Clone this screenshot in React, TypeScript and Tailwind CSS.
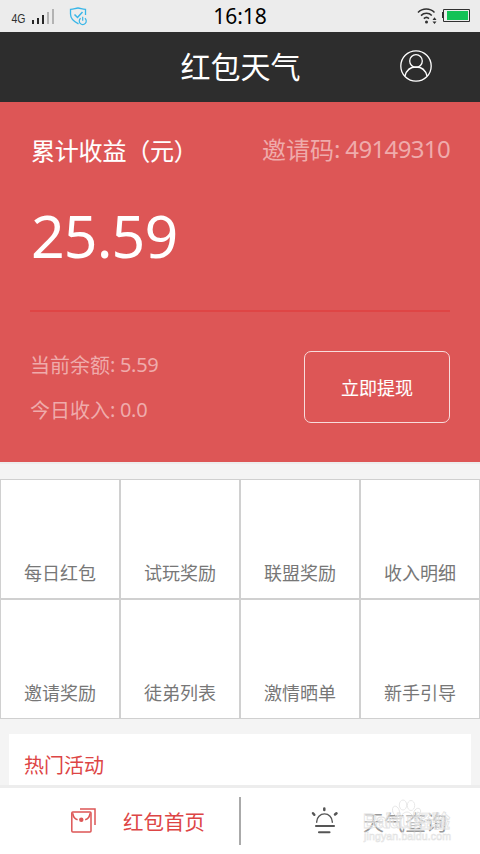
const tiles = ["每日红包", "试玩奖励", "联盟奖励", "收入明细", "邀请奖励", "徒弟列表", "激情晒单", "新手引导"];

function StatusBar() {
  return (
    <div className="relative flex h-8 shrink-0 items-center justify-center bg-[#ececec] text-black">
      <div className="absolute left-0 top-0">
        <svg width="96" height="32" viewBox="0 0 96 32" fill="none">
          <text x="11.5" y="23" fontSize="13" fill="#303030" fontFamily="Liberation Sans, sans-serif" textLength="14" lengthAdjust="spacingAndGlyphs">4G</text>
          <path d="M33 20v4M38 18v6M43 15v9" stroke="#262626" strokeWidth="2" />
          <path d="M48 12v12M53 9v15" stroke="#b3b3b3" strokeWidth="2" />
          <path d="M78.5 23.8C72.500 21 70.500 18 70.500 14V9.300C74 9.300 75.500 8 78 8s4 1.300 7.500 1.300V15" stroke="#38b6e8" strokeWidth="1.300" />
          <path d="M74.500 14.500l3 3 5-5.500" stroke="#38b6e8" strokeWidth="1.500" />
          <path d="M80.600 18.300a3.500 3.500 0 1 0 4.300 0M82.700 16.800v4" stroke="#38b6e8" strokeWidth="1.200" />
        </svg>
      </div>
      <span className="text-[21px] leading-8">16:18</span>
      <div className="absolute right-0 top-0">
        <svg width="68" height="32" viewBox="0 0 68 32" fill="none">
          <path d="M6 12.500c4.500-4.600 12-4.600 16.500 0M9 15.600c3-3 8-3 10.800 0M11.800 18.600c1.700-1.600 3.600-1.600 5.200 0" stroke="#303030" strokeWidth="1.500" />
          <circle cx="14.500" cy="22" r="1.500" fill="#303030" />
          <path d="M20.500 20l2-2.700 2 2.700zM20.500 21.500l2 2.500 2-2.500z" fill="#303030" />
          <path d="M31.500 9.500h26v12h-26z" stroke="#303030" />
          <path d="M30 12h1v6h-1z" fill="#303030" />
          <path d="M35 11h21v9H35z" fill="#12c256" />
        </svg>
      </div>
    </div>
  );
}

function Header() {
  return (
    <header className="grid h-[70px] shrink-0 grid-cols-[1fr_auto_1fr] items-center bg-[#2d2d2d] text-white">
      <span />
      <h1 className="pl-px text-[30px] leading-[70px]">红包天气</h1>
      <svg className="mr-12 -mt-0.5 justify-self-end" width="32" height="32" viewBox="0 0 32 32" fill="none" stroke="white" strokeWidth="1.300">
        <circle cx="16" cy="16" r="15.200" />
        <circle cx="16" cy="11" r="6.300" />
        <path d="M5 26C6.500 20 10.500 17 16 17s9.500 3 11 9" />
      </svg>
    </header>
  );
}

function Earnings() {
  return (
    <section className="h-[360px] shrink-0 bg-[#dd5656] px-[30px] text-white">
      <div className="flex justify-between pt-[30px] text-2xl leading-9">
        <span className="pl-px pt-px tracking-[-0.2px] [-webkit-text-stroke:0.1px_white]">累计收益（元）</span>
        <span className="text-[#efabab]">邀请码<span className="inline-block -translate-y-px tracking-[-0.65px]">: 49149310</span></span>
      </div>
      <div className="mt-[29px] h-[74px] pl-px text-[59px] leading-[74px] tracking-[-0.9px]">25.59</div>
      <div className="mt-[38px] h-0.5 bg-[#df4545]" />
      <div className="mt-[39px] flex justify-between">
        <div className="text-xl leading-[30px] text-[#efabab]">
          <p>当前余额<span className="inline-block -translate-y-px tracking-[-0.3px]">: 5.59</span></p>
          <p className="mt-[15px]">今日收入<span className="inline-block -translate-y-px tracking-[-0.3px]">: 0.0</span></p>
        </div>
        <button className="h-[72px] w-[146px] rounded-[7px] border border-[#f8dcdc] pt-px text-lg [-webkit-text-stroke:0.1px_white]">立即提现</button>
      </div>
    </section>
  );
}

function BottomNav() {
  return (
    <nav className="grid h-[69px] shrink-0 grid-cols-2 border-t-[3px] border-[#ededed] bg-white">
      <div className="my-[9px] flex h-12 items-center border-r border-[#aaaaaa] pl-[71px] text-[#dd5656]">
        <svg className="-mt-1" width="26" height="28" viewBox="0 0 26 28" fill="none" stroke="#dd5656">
          <rect x="0.800" y="7.100" width="19.200" height="19.800" rx="1" strokeWidth="1.500" />
          <path d="M9 4h15v16" strokeWidth="1.500" />
          <path d="M1.800 8.300c.2 3.300 1.700 5.600 4.800 6.500M19 8.300c-.2 3.300-1.700 5.600-4.800 6.500" strokeWidth="1.600" />
          <circle cx="10.300" cy="14.700" r="2.200" fill="#dd5656" stroke="none" />
        </svg>
        <span className="ml-[26px] pt-0.5 text-[20.5px] leading-8 text-[#dd4545]">红包首页</span>
      </div>
      <div className="relative my-[9px] flex h-12 items-center border-l border-[#aaaaaa] pl-[70px] text-[#999]">
        <svg className="-mt-0.5" width="28" height="30" viewBox="0 0 28 30" fill="none" stroke="#555" strokeLinecap="round">
          <path d="M5.700 17.200v-.5a7.700 7.700 0 0 1 15.600 0v.5" strokeWidth="1.400" />
          <path d="M5 21h18M8 27.300h10.500" strokeWidth="2.100" />
          <path d="M13.300 3.500V5M2 8.200l1.300 1.500M25.500 8.200l-1.500 1.300" strokeWidth="2.500" />
        </svg>
        <span className="ml-6 pt-0.5 text-[21px] leading-8">天气查询</span>
        <Watermark />
      </div>
    </nav>
  );
}

function Watermark() {
  return (
    <div className="absolute left-[121px] top-0">
      <svg width="98" height="48" viewBox="0 0 98 48" fill="white" fillOpacity=".35" stroke="#e2e2e2" strokeWidth=".8">
        <ellipse cx="34" cy="14" rx="3.300" ry="5" transform="rotate(-20 34 14)" />
        <ellipse cx="41" cy="8" rx="3.700" ry="5" />
        <ellipse cx="49" cy="8.500" rx="3.700" ry="5" />
        <ellipse cx="55" cy="16" rx="3.300" ry="5" transform="rotate(25 55 16)" />
        <path d="M45 15c4 0 6 5 10 9 3 4-1 7-5 6-4-1-6-1-9 0-5 1-9-2-6-6 3-4 6-9 10-9z" />
        <text x="1" y="31" fontSize="20" fontWeight="700" fontFamily="Liberation Sans, sans-serif" textLength="49">Baidu</text>
        <text x="52" y="31" fontSize="18" fontWeight="700" textLength="36">经验</text>
        <text x="2" y="43" fontSize="10.500" strokeWidth=".6" fontFamily="Liberation Sans, sans-serif" textLength="87">jingyan.baidu.com</text>
      </svg>
    </div>
  );
}

export default function App() {
  return (
    <div className="flex h-[854px] w-[480px] flex-col overflow-hidden bg-[#f4f4f4] font-['Noto_Sans','Noto_Sans_CJK_SC',sans-serif]">
      <StatusBar />
      <Header />
      <Earnings />
      <main className="flex grow flex-col border-t-2 border-[#ededed]">
        <div className="mt-[15px] grid shrink-0 grid-cols-4">
          {tiles.map((label) => (
            <div key={label} className="flex h-[120px] items-end justify-center border border-[#d0d0d0] bg-white pb-3 text-lg leading-[26px] text-[#777]">
              {label}
            </div>
          ))}
        </div>
        <div className="mx-[9px] mt-[15px] grow bg-white px-[15px] pt-[17px] text-xl leading-[30px] text-[#dd4545]">热门活动</div>
      </main>
      <BottomNav />
    </div>
  );
}
